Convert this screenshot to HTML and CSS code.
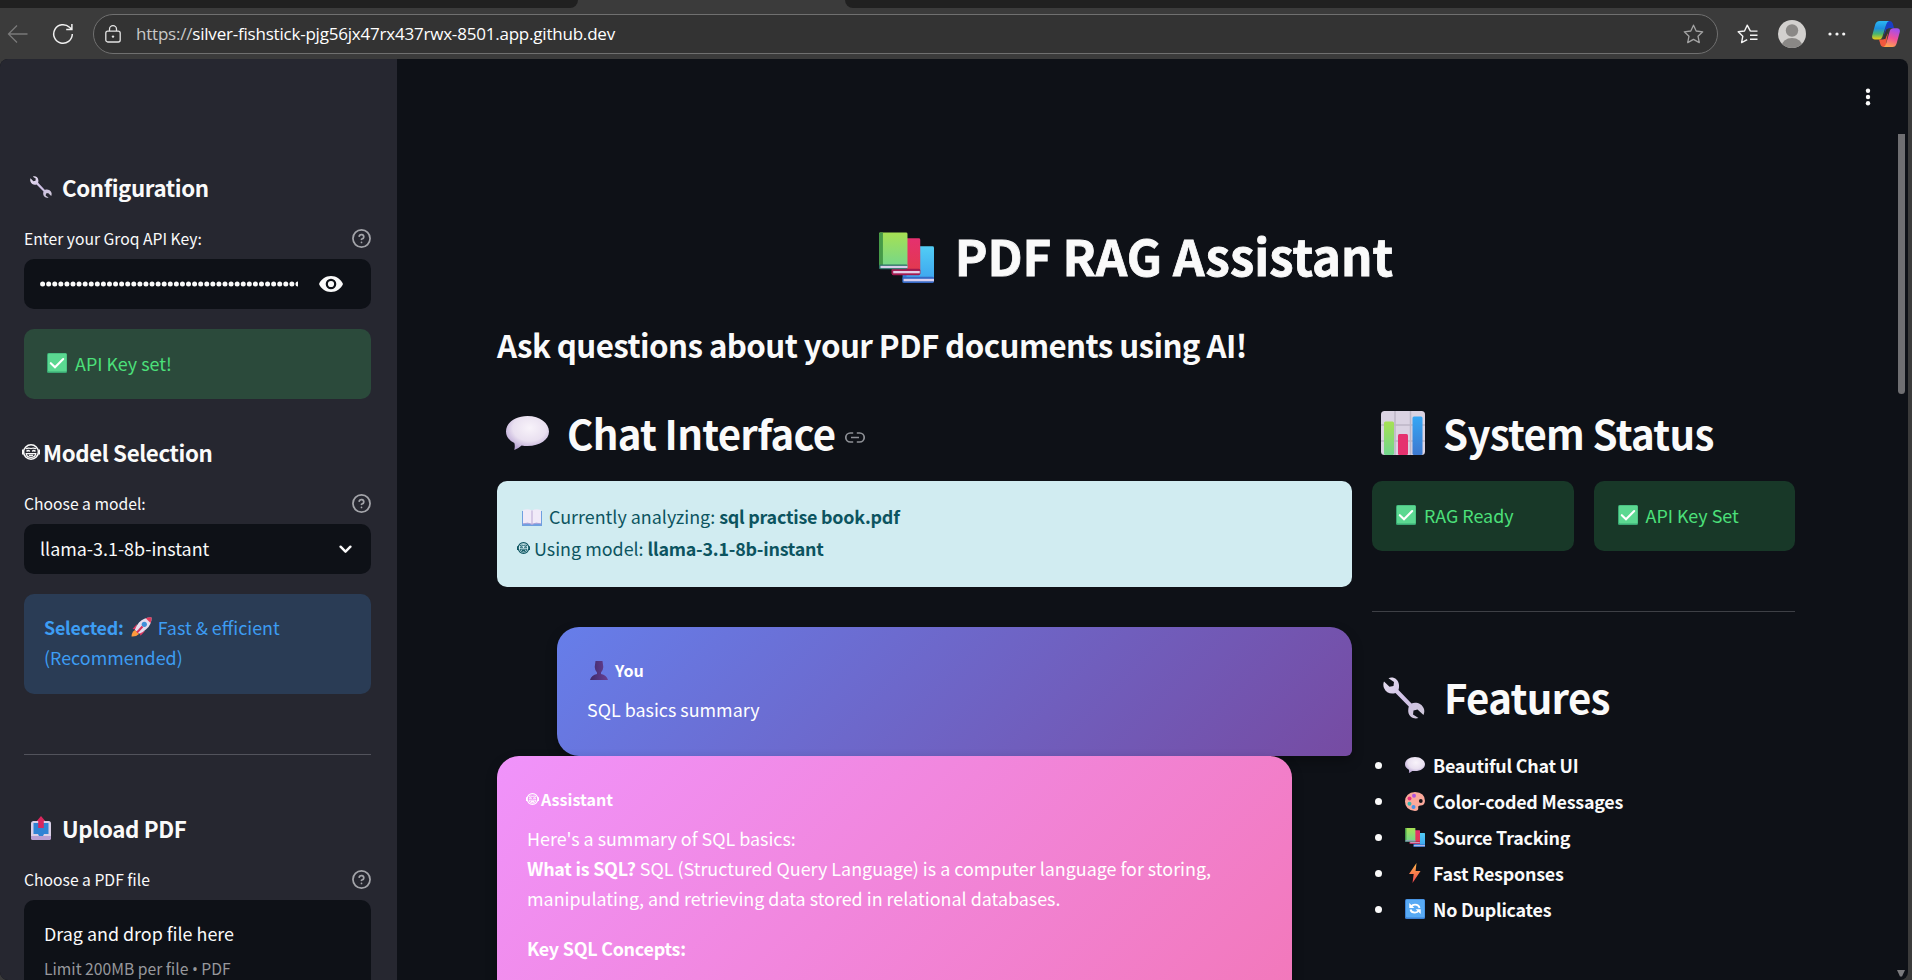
FILE: index.html
```
<!DOCTYPE html>
<html lang="en">
<head>
<meta charset="utf-8">
<title>PDF RAG Assistant</title>
<link rel="stylesheet" href="styles.css">
</head>
<body>
<svg width="0" height="0" class="defs" aria-hidden="true">
  <defs>
    <linearGradient id="gGreen" x1="0" y1="0" x2="0" y2="1"><stop offset="0" stop-color="#a6e153"/><stop offset="1" stop-color="#72d68e"/></linearGradient>
    <linearGradient id="gRed" x1="0" y1="0" x2="0" y2="1"><stop offset="0" stop-color="#e5306f"/><stop offset="1" stop-color="#e23a4a"/></linearGradient>
    <linearGradient id="gBlue" x1="0" y1="0" x2="0" y2="1"><stop offset="0" stop-color="#52cdf5"/><stop offset="1" stop-color="#3ba2ee"/></linearGradient>
    <linearGradient id="gBar" x1="0" y1="0" x2="0" y2="1"><stop offset="0" stop-color="#36a7f5"/><stop offset="1" stop-color="#3c78cf"/></linearGradient>
    <linearGradient id="gBolt" x1="0" y1="0" x2="0" y2="1"><stop offset="0" stop-color="#ffb84a"/><stop offset="1" stop-color="#f0424e"/></linearGradient>
    <linearGradient id="gMetal" x1="0" y1="0" x2="1" y2="1"><stop offset="0" stop-color="#e6dfee"/><stop offset=".5" stop-color="#cfc0e6"/><stop offset="1" stop-color="#cfc9d8"/></linearGradient>
    <radialGradient id="gBubble" cx=".55" cy=".35" r=".65"><stop offset="0" stop-color="#f8f3fa"/><stop offset=".6" stop-color="#e9e0f0"/><stop offset="1" stop-color="#b9a5d4"/></radialGradient>
    <linearGradient id="gPerson" x1="0" y1="0" x2="1" y2="0"><stop offset="0" stop-color="#3f2a6b"/><stop offset="1" stop-color="#683f92"/></linearGradient>
    <linearGradient id="gCopA" x1="0" y1="0" x2="0" y2="1"><stop offset="0" stop-color="#2bb8f2"/><stop offset=".4" stop-color="#1d8fe0"/><stop offset=".7" stop-color="#4bb56c"/><stop offset="1" stop-color="#f2cf12"/></linearGradient>
    <linearGradient id="gCopB" x1=".6" y1="0" x2=".3" y2="1"><stop offset="0" stop-color="#a04ff0"/><stop offset=".5" stop-color="#f0509b"/><stop offset="1" stop-color="#ffa64a"/></linearGradient>
    <symbol id="books" viewBox="0 0 56 52">
      <rect x="27" y="14" width="29" height="37" rx="1.500" fill="url(#gBlue)"/><path d="M24 40H28V51H24Z" fill="#2f80dc"/><rect x="24" y="45" width="32" height="6.500" rx="1.500" fill="#3568c4"/><rect x="25" y="47.200" width="31" height="2.500" fill="#d9d0f0"/>
      <rect x="13" y="6" width="29" height="37" rx="1.500" fill="url(#gRed)"/><rect x="13" y="37" width="29" height="6.500" rx="1.500" fill="#a3184f"/><rect x="14.500" y="39.200" width="27" height="2.400" fill="#e3cde6"/>
      <rect x="0" y="0" width="29" height="37" rx="1.500" fill="url(#gGreen)"/><path d="M0 1.500Q0 0 1.500 0H4V36H0Z" fill="#469a48"/><rect x="0" y="32.500" width="29" height="5" rx="1.500" fill="#2d7267"/><rect x="1.500" y="34" width="27.500" height="2.300" fill="#d8cdea"/>
    </symbol>
    <symbol id="wrench" viewBox="0 0 42 42">
      <path d="M5.500 1.200C10 -.7 15.500 2 16 8Q16.200 11 15.500 13L28.500 26.500C33 24.800 39 26.500 41 32Q41.800 35 40.500 38L34.500 32.500L30.500 33.500L30 37.500L35.500 41C31 42.500 26 40 25.300 35Q25 32 25.800 29.500L12.500 16C8 17.500 3 16 1 11Q-.3 7.500 1 4.500L6.500 9.800L10.500 9L11 5Z" fill="url(#gMetal)"/>
    </symbol>
    <symbol id="bubble" viewBox="0 0 44 34" preserveAspectRatio="none"><path d="M22 0C35 0 44 7.500 44 15.500S35 30 22 30Q19 30 16 29.500Q12 33 8.500 34Q9.500 30 8.500 27Q0 23 0 15.500C0 7 9 0 22 0Z" fill="url(#gBubble)"/></symbol>
    <symbol id="check" viewBox="0 0 20 20"><rect width="20" height="20" rx="1.500" fill="#3aa873"/><rect x="1" y=".6" width="18.600" height="18" rx="1" fill="#5bd891"/><path d="M3.800 10.200L8 14.300L16.200 6" fill="none" stroke="#fff" stroke-width="2.100" stroke-linecap="round"/></symbol>
    <symbol id="chart" viewBox="0 0 44 44"><rect width="44" height="44" rx="3.500" fill="#dad3e2"/><path d="M14 0V44M29.500 0V44M0 14H44M0 30H44" stroke="#bdb6c6" stroke-width="1.500"/><rect x="3" y="10.500" width="10" height="33.500" rx="1.500" fill="url(#gGreen)"/><rect x="17" y="23" width="10" height="21" rx="1.500" fill="#e5326f"/><rect x="31.500" y="5.500" width="10" height="38.500" rx="1.500" fill="url(#gBar)"/></symbol>
    <symbol id="robot" viewBox="0 0 17 16" preserveAspectRatio="none"><ellipse cx="8.500" cy="8" rx="7" ry="7.200" fill="none" stroke="currentColor" stroke-width="1.500"/><path d="M.7 5.500V10.500M16.300 5.500V10.500" stroke="currentColor" stroke-width="1.400"/><path d="M3.700 4.800Q6 3.600 8.500 4.500Q11 3.600 13.300 4.800M4 9.600H13Q12.500 13.300 8.500 13.300T4 9.600Z" fill="none" stroke="currentColor" stroke-width="1.200"/><path d="M4.300 7.400Q5.800 5.600 7.300 7.400M9.700 7.400Q11.200 5.600 12.700 7.400" fill="none" stroke="currentColor" stroke-width="1.500"/><path d="M6.500 11.300H10.500" stroke="currentColor" stroke-width="1.300"/></symbol>
    <symbol id="help" viewBox="0 0 24 24"><circle cx="12" cy="12" r="10.800" fill="none" stroke="currentColor" stroke-width="2.200"/><path d="M9.090 9a3 3 0 0 1 5.830 1c0 2-3 3-3 3M12 17h.01" fill="none" stroke="currentColor" stroke-width="2.200" stroke-linecap="round" stroke-linejoin="round"/></symbol>
  </defs>
</svg>

<div class="browser">
  <div class="tabs"><div class="tab tab-left"></div><div class="tab-active"></div><div class="tab tab-right"></div></div>
  <div class="toolbar">
    <svg class="nav-back" width="22" height="20" viewBox="0 0 22 20"><path d="M10 1.500L1.500 10L10 18.500M1.500 10H20.500" fill="none" stroke="#7a7a7a" stroke-width="1.300"/></svg>
    <svg class="nav-reload" width="22" height="22" viewBox="0 0 22 22"><path d="M20.300 11A9.300 9.300 0 1 1 17.500 4.300L19.700 6.300M19.900 1V6.600H14.200" fill="none" stroke="#f0f0f0" stroke-width="1.500"/></svg>
    <div class="address">
      <svg class="lock" width="16" height="18" viewBox="0 0 16 18"><rect x=".8" y="6.200" width="14.400" height="10.800" rx="2" fill="none" stroke="#e4e4e4" stroke-width="1.300"/><path d="M4.500 6V4.200a3.500 3.500 0 0 1 7 0V6" fill="none" stroke="#e4e4e4" stroke-width="1.300"/><circle cx="8" cy="11.600" r="1.200" fill="#e4e4e4"/></svg>
      <span class="url"><span class="scheme">https://</span>silver-fishstick-pjg56jx47rx437rwx-8501.app.github.dev</span>
      <svg class="star" width="21" height="20" viewBox="0 0 21 20"><path d="M10.500 1.200L13.200 7L19.700 7.800L15 12.200L16.300 18.600L10.500 15.400L4.700 18.600L6 12.200L1.300 7.800L7.800 7Z" fill="none" stroke="#a4a4a4" stroke-width="1.300" stroke-linejoin="round"/></svg>
    </div>
    <svg class="favs" width="21" height="20" viewBox="0 0 21 20"><path d="M13.400 7.200L10.200 1.200L7.500 7L1.200 7.800L5.800 12.200L4.600 18.600L10.200 15.600M13.200 7.100H20.500M13 11.200H20.500M13 15.200H20.500" fill="none" stroke="#f4f4f4" stroke-width="1.400" stroke-linejoin="round"/></svg>
    <svg class="avatar" width="28" height="28" viewBox="0 0 28 28"><defs><clipPath id="av"><circle cx="14" cy="14" r="14"/></clipPath></defs><g clip-path="url(#av)"><rect width="28" height="28" fill="#d2d0ce"/><circle cx="14" cy="10.500" r="6.200" fill="#8a8886"/><ellipse cx="14" cy="26.500" rx="10.500" ry="8.500" fill="#8a8886"/></g></svg>
    <svg class="more" width="18" height="4" viewBox="0 0 18 4"><g fill="#f4f4f4"><circle cx="2" cy="2" r="1.600"/><circle cx="9" cy="2" r="1.600"/><circle cx="15.700" cy="2" r="1.600"/></g></svg>
    <svg class="copilot" width="28" height="26" viewBox="0 0 28 26"><path d="M14.500 0H18Q20 0 20.800 2.500L22 7H18Q15 7 14 10L12 14Z" fill="#1a3fc4"/><path d="M7 18.500H11Q13 18.500 14 15.500L16 12L13.500 26H12Q9 26 8.300 23Z" fill="#f2583d"/><path d="M7.500 0H17Q15 .8 14.200 3.500L10.300 16Q9.500 18.500 7 18.500H3Q-.5 18.500 .2 14.500L3.200 3.500Q4.300 0 7.500 0Z" fill="url(#gCopA)"/><path d="M20.500 26H11.500Q13.500 25 14.300 22L17.800 10Q18.500 7.200 21.500 7.200H25Q28.400 7.200 27.800 11L24.600 22.500Q23.600 26 20.500 26Z" fill="url(#gCopB)"/><path d="M14.600 8L16.600 8.600L13.300 18.300L11.400 17.600Z" fill="#333"/></svg>
  </div>
</div>

<div class="app">
  <aside class="sidebar">
    <h3 class="side-title"><svg class="i-wr" width="22" height="22"><use href="#wrench"/></svg><span>Configuration</span></h3>
    <div class="label"><span>Enter your Groq API Key:</span><svg class="help" width="19" height="19"><use href="#help"/></svg></div>
    <div class="field">
      <svg class="dots" width="258" height="8" viewBox="0 0 258 8"><line x1="2.600" y1="4" x2="260" y2="4" stroke="#fafafa" stroke-width="5" stroke-linecap="round" stroke-dasharray="0 6.080"/></svg>
      <svg class="eye" width="24" height="16" viewBox="0 0 24 16"><path fill-rule="evenodd" d="M12 0C6.500 0 2 3.300 0 8C2 12.700 6.500 16 12 16S22 12.700 24 8C22 3.300 17.500 0 12 0ZM12 13.300A5.300 5.300 0 1 1 12 2.700A5.300 5.300 0 0 1 12 13.300ZM12 4.900A3.100 3.100 0 1 0 12 11.100A3.100 3.100 0 0 0 12 4.900Z" fill="#fafafa"/></svg>
    </div>
    <div class="alert alert-side"><svg width="20" height="20"><use href="#check"/></svg><span>API Key set!</span></div>
    <h3 class="side-title"><svg class="i-rb" width="18" height="16"><use href="#robot"/></svg><span>Model Selection</span></h3>
    <div class="label"><span>Choose a model:</span><svg class="help" width="19" height="19"><use href="#help"/></svg></div>
    <div class="field select"><span>llama-3.1-8b-instant</span><svg class="chev" width="13" height="9" viewBox="0 0 13 9"><path d="M1.600 1.700L6.500 6.700L11.400 1.700" fill="none" stroke="#fafafa" stroke-width="2.400" stroke-linecap="round" stroke-linejoin="round"/></svg></div>
    <div class="selected">
      <div class="sel-line"><b>Selected:</b><svg width="21" height="20" viewBox="0 0 21 20"><path d="M6 7L1.500 12L5 12.500ZM14 14L9.500 18.800L8.500 15Z" fill="#e03a63"/><path d="M20.500 .4Q13 .2 8 5.500Q5 9 3.800 13L8 16.800Q12 15.500 15.500 12Q20.800 7 20.500 .4Z" fill="#e6dcec"/><path d="M20.500 .4Q17.500 .2 14.800 1.300L19.500 6Q20.700 3.300 20.500 .4Z" fill="#e03a5c"/><circle cx="13.300" cy="7.300" r="2.600" fill="#3f8fd8"/><path d="M4 13L8 17Q5 20 .5 19.500Q.5 15 4 13Z" fill="#ff9a3c"/><path d="M11.500 9.500L6 15.500" stroke="#d7305c" stroke-width="2"/></svg><span>Fast &amp; efficient</span></div>
      <div class="sel-line">(Recommended)</div>
    </div>
    <hr class="side-rule">
    <h3 class="side-title"><svg class="i-up" width="20" height="24" viewBox="0 0 20 24"><rect y="5" width="20" height="19" rx="2.500" fill="#d9cfe6"/><path d="M0 20H20V22Q20 24 18 24H2Q0 24 0 22Z" fill="#b79fd3"/><path d="M2.500 7H17.500V18H13L12 20H8L7 18H2.500Z" fill="#2f83d4"/><path d="M10 0L14.200 5H12.800V12H7.200V5H5.800Z" fill="#d8275d"/></svg><span>Upload PDF</span></h3>
    <div class="label"><span>Choose a PDF file</span><svg class="help" width="19" height="19"><use href="#help"/></svg></div>
    <div class="uploader"><div class="drag">Drag and drop file here</div><div class="limit">Limit 200MB per file <span class="dot">•</span> PDF</div></div>
  </aside>

  <main class="main">
    <svg class="menu-dots" width="6" height="18" viewBox="0 0 6 18"><g fill="#fafafa"><circle cx="3" cy="2.700" r="2.200"/><circle cx="3" cy="9" r="2.200"/><circle cx="3" cy="15.200" r="2.200"/></g></svg>
    <div class="scroll-thumb"></div>
    <svg class="scroll-arrow" width="8" height="7" viewBox="0 0 8 7"><path d="M0 0H8L5 6.500H3Z" fill="#7a7a7d"/></svg>
    <div class="content">
      <h1 class="title"><svg width="55" height="52"><use href="#books"/></svg><span>PDF RAG Assistant</span></h1>
      <h3 class="subtitle"><span>Ask questions about your PDF documents using AI!</span></h3>
      <div class="cols">
        <section class="chat">
          <h2 class="h2"><svg class="i-bub" width="43" height="34"><use href="#bubble"/></svg><span>Chat Interface</span><svg class="link" width="20" height="11" viewBox="0 0 20 11"><path d="M8.200 1H5.300a4.400 4.400 0 0 0 0 9H8.200M11.800 1H14.700a4.400 4.400 0 0 1 0 9H11.800M6 5.500H14" fill="none" stroke="#8e9096" stroke-width="1.700"/></svg></h2>
          <div class="info">
            <div class="info-line l1"><svg width="20" height="17" viewBox="0 0 20 17"><path d="M0 2H20V17H0Z" fill="#6f9fe0"/><path d="M1 1Q6-.5 10 1.500Q14-.5 19 1V15Q14 13.500 10 15.500Q6 13.500 1 15Z" fill="#f1eaf8"/><path d="M10 1.500V15.500" stroke="#c4b2da" stroke-width="1.200"/><path d="M1 14.800Q6 13.300 10 15.300Q14 13.300 19 14.800" fill="none" stroke="#a9a0d8"/></svg><span>Currently analyzing: <b>sql practise book.pdf</b></span></div>
            <div class="info-line l2"><svg width="13" height="12"><use href="#robot"/></svg><span>Using model: <b>llama-3.1-8b-instant</b></span></div>
          </div>
          <article class="msg user">
            <div class="who w-user"><svg width="18" height="19" viewBox="0 0 18 19"><path d="M5.500 0H12.500L13.300 6Q13 10 11 11.500V13Q16.500 14 18 19H0Q1.500 14 7 13V11.500Q5 10 4.700 6Z" fill="url(#gPerson)"/></svg><b>You</b></div>
            <p>SQL basics summary</p>
          </article>
          <article class="msg bot">
            <div class="who w-bot"><svg width="13" height="12"><use href="#robot"/></svg><b>Assistant</b></div>
            <p>Here's a summary of SQL basics:</p>
            <p><b>What is SQL?</b> SQL (Structured Query Language) is a computer language for storing,<br>manipulating, and retrieving data stored in relational databases.</p>
            <p class="concepts"><b>Key SQL Concepts:</b></p>
          </article>
        </section>
        <section class="status">
          <h2 class="h2"><svg class="i-chart" width="44" height="44"><use href="#chart"/></svg><span>System Status</span></h2>
          <div class="badges">
            <div class="alert badge"><svg width="20" height="20"><use href="#check"/></svg><span>RAG Ready</span></div>
            <div class="alert badge"><svg width="20" height="20"><use href="#check"/></svg><span>API Key Set</span></div>
          </div>
          <hr class="rule">
          <h2 class="h2 h-feat"><svg class="i-wrl" width="42" height="42"><use href="#wrench"/></svg><span>Features</span></h2>
          <ul class="features">
            <li><svg width="20" height="16"><use href="#bubble"/></svg><b>Beautiful Chat UI</b></li>
            <li><svg width="20" height="19" viewBox="0 0 20 19"><path d="M10 0Q20 .5 20 9Q19.500 13.500 15.500 13.500Q12.500 13.500 13.300 16Q13.500 19 10 19Q0 18 0 9.500Q.5 .5 10 0Z" fill="#fba99b"/><circle cx="15.800" cy="9" r="1.900" fill="#17131b"/><circle cx="9" cy="3.800" r="2" fill="#b155e0"/><circle cx="4.500" cy="6.500" r="2" fill="#e8327c"/><circle cx="4.500" cy="11.700" r="2" fill="#35b6b0"/><circle cx="8.500" cy="15" r="2" fill="#4693ea"/></svg><b>Color-coded Messages</b></li>
            <li><svg width="20" height="19" viewBox="0 0 56 52" preserveAspectRatio="none"><use href="#books" width="56" height="52"/></svg><b>Source Tracking</b></li>
            <li><svg width="20" height="20" viewBox="0 0 20 20"><path d="M11.500 0L4 11H8.700L7.500 20L15.500 8H10.600Z" fill="url(#gBolt)"/></svg><b>Fast Responses</b></li>
            <li><svg width="20" height="20" viewBox="0 0 20 20"><rect width="20" height="20" rx="1.500" fill="#3b80d4"/><rect x="1" y=".5" width="18.500" height="18" rx="1" fill="#58aaf4"/><path d="M6 7.500Q7.500 5.600 10 5.600Q13.800 5.600 14.500 9M14 11.500Q12.500 13.600 10 13.600Q6.200 13.600 5.500 10.500" fill="none" stroke="#fff" stroke-width="1.900"/><path d="M4.300 4V9H9.300ZM15.700 15V10.200H10.700Z" fill="#fff"/></svg><b>No Duplicates</b></li>
          </ul>
        </section>
      </div>
    </div>
  </main>
</div>
</body>
</html>
```
FILE: styles.css
```
* { box-sizing: border-box; }
body {
  margin: 0;
  width: 1912px;
  height: 980px;
  overflow: hidden;
  display: flex;
  flex-direction: column;
  background: #3b3b3b;
  color: #fafafa;
  font-family: "Source Sans Pro", "Noto Sans CJK SC", "Noto Sans", sans-serif;
  font-size: 17.9px;
}
h1, h2, h3, p, ul, hr { margin: 0; padding: 0; border: 0; }
svg { display: block; flex: none; }
.defs { position: absolute; }
span, b { white-space: nowrap; }
b { letter-spacing: -0.23px; }

/* Browser chrome */
.browser { height: 59px; flex: none; background: #3b3b3b; }
.tabs { display: flex; height: 8px; background: #3b3b3b; }
.tab { background: #202020; height: 8px; }
.tab-left { width: 578px; border-bottom-right-radius: 8px; }
.tab-active { width: 267px; }
.tab-right { flex: 1; border-bottom-left-radius: 8px; }
.toolbar { display: flex; align-items: center; height: 52px; }
.nav-back { margin-left: 7px; }
.nav-reload { margin-left: 23px; }
.address {
  display: flex;
  align-items: center;
  width: 1625px;
  height: 40px;
  margin-left: 19px;
  padding: 0 13px 0 11px;
  border: 1px solid #707070;
  border-radius: 20px;
  background: #333;
}
.url {
  margin: -2px 0 0 15px;
  flex: 1;
  font-family: "Open Sans", "Noto Sans", sans-serif;
  font-size: 17px;
  letter-spacing: -0.21px;
  color: #fff;
}
.scheme { color: #c8c8c8; }
.favs { margin-left: 19px; }
.avatar { margin-left: 20px; }
.more { margin-left: 22px; }
.copilot { margin-left: 26px; }

/* Shell */
.app {
  display: flex;
  width: 1908px;
  height: 921px;
  border-radius: 8px;
  overflow: hidden;
  background: #0e1117;
}
.sidebar { width: 397px; flex: none; padding: 106px 26px 0 24px; background: #262730; overflow: hidden; }
.main { position: relative; flex: 1; overflow: hidden; }
.menu-dots { position: absolute; left: 1468px; top: 29px; }
.scroll-thumb { position: absolute; left: 1501px; top: 75px; width: 7px; height: 260px; background: #6f6f72; border-radius: 0 0 4px 4px; }
.scroll-arrow { position: absolute; left: 1500px; top: 911px; }

/* Sidebar */
.side-title { display: flex; align-items: center; height: 44px; font-size: 22.3px; line-height: 44px; font-weight: 600; letter-spacing: -0.38px; }
.i-wr { margin: 0 10px 0 6px; }
.i-rb { margin: 0 3px 0 -2px; }
.i-up { margin: 0 11px 0 7px; }
.label { display: flex; align-items: center; justify-content: space-between; height: 25px; margin-top: 17px; font-size: 15.7px; line-height: 25px; }
.help { color: #a3a4a9; }
.field { display: flex; align-items: center; justify-content: space-between; height: 50px; margin-top: 8px; padding: 0 19px 0 16px; border-radius: 10px; background: #0e1117; line-height: 50px; }
.field span { margin-bottom: 3px; }
.eye { margin-right: 9px; }
.alert { display: flex; align-items: center; height: 70px; border-radius: 10px; color: #4ce07a; line-height: 70px; }
.alert-side { margin-top: 20px; padding-left: 23px; gap: 8px; background: #2b4a3b; margin-bottom: 31px; }
.alert svg, .alert span { margin-bottom: 2px; }
.selected { height: 100px; margin-top: 20px; padding: 18px 20px; border-radius: 10px; background: #2a3c55; color: #3d9df3; }
.sel-line { display: flex; align-items: center; height: 30px; line-height: 30px; }
.sel-line svg { margin: 0 6px 0 7px; }
.side-rule { height: 1px; margin: 60px 0 51px; background: #52535c; }
.uploader { height: 120px; margin-top: 8px; padding: 18px 20px; border-radius: 10px; background: #0e1117; }
.drag { height: 30px; line-height: 30px; }
.limit { margin-top: 8px; font-size: 15.7px; line-height: 25px; color: #97989c; }
.dot { font-family: "Open Sans", sans-serif; }

/* Content */
.content { width: 1298px; margin-left: 100px; }
.title { display: flex; justify-content: center; align-items: center; gap: 21px; height: 90px; margin-top: 154px; padding-right: 20px; font-size: 49.2px; font-weight: 700; line-height: 90px; }
.title span { margin-bottom: 7px; -webkit-text-stroke: 0.8px #fafafa; }
.subtitle { height: 60px; margin-top: 12px; font-size: 31.3px; font-weight: 600; line-height: 60px; letter-spacing: -0.59px; }
.cols { display: grid; grid-template-columns: 855px 423px; gap: 20px; margin-top: 31px; }
.h2 { display: flex; align-items: center; height: 75px; padding-bottom: 21px; font-size: 40.2px; font-weight: 600; line-height: 54px; letter-spacing: -0.7px; }
.h2 span { margin-bottom: 1px; }
.i-bub { margin: 0 18px 0 9px; }
.link { margin: 8px 0 0 10px; }
.i-chart { margin: 0 18px 0 9px; }
.i-wrl { margin: 0 19px 0 11px; }
.h-feat { padding-bottom: 0; }
.info { height: 106px; padding: 19px 20px; border-radius: 10px; background: #d1ecf1; color: #0c5460; }
.info-line { display: flex; align-items: center; height: 32px; line-height: 32px; }
.l1 svg { margin: 2px 7px 0 5px; }
.l2 svg { margin: 0 4px 0 0; }
.msg { color: #fff; padding: 29px 30px; line-height: 30px; box-shadow: 0 5px 12px rgba(0, 0, 0, 0.3); }
.msg p { white-space: nowrap; }
.user { height: 129px; margin: 40px 0 0 60px; border-radius: 22px 22px 6px 22px; background: linear-gradient(135deg, #667eea 0%, #764ba2 100%); }
.bot { width: 795px; height: 1500px; border-radius: 22px 22px 22px 6px; background: linear-gradient(135deg, #f093fb 0%, #f5576c 100%); }
.who { display: flex; align-items: center; height: 28px; margin-bottom: 10px; font-size: 16.1px; }
.who b { letter-spacing: 0; }
.w-user svg { margin: 0 7px 0 3px; }
.w-bot svg { margin: 0 2px 0 -1px; }
.concepts { margin-top: 20px; }
.badges { display: grid; grid-template-columns: 1fr 1fr; gap: 20px; }
.badge { padding-left: 24px; gap: 8px; background: #183828; }
.rule { height: 1px; margin: 60px 0 48px; background: #3e4046; }
.features { list-style: none; margin-top: 12px; }
.features li { display: flex; align-items: center; height: 36px; line-height: 36px; }
.features li::before { content: ""; width: 7px; height: 7px; margin: 0 23px 0 3px; border-radius: 50%; background: #fafafa; }
.features b { margin-left: 8px; font-weight: 600; }
```
